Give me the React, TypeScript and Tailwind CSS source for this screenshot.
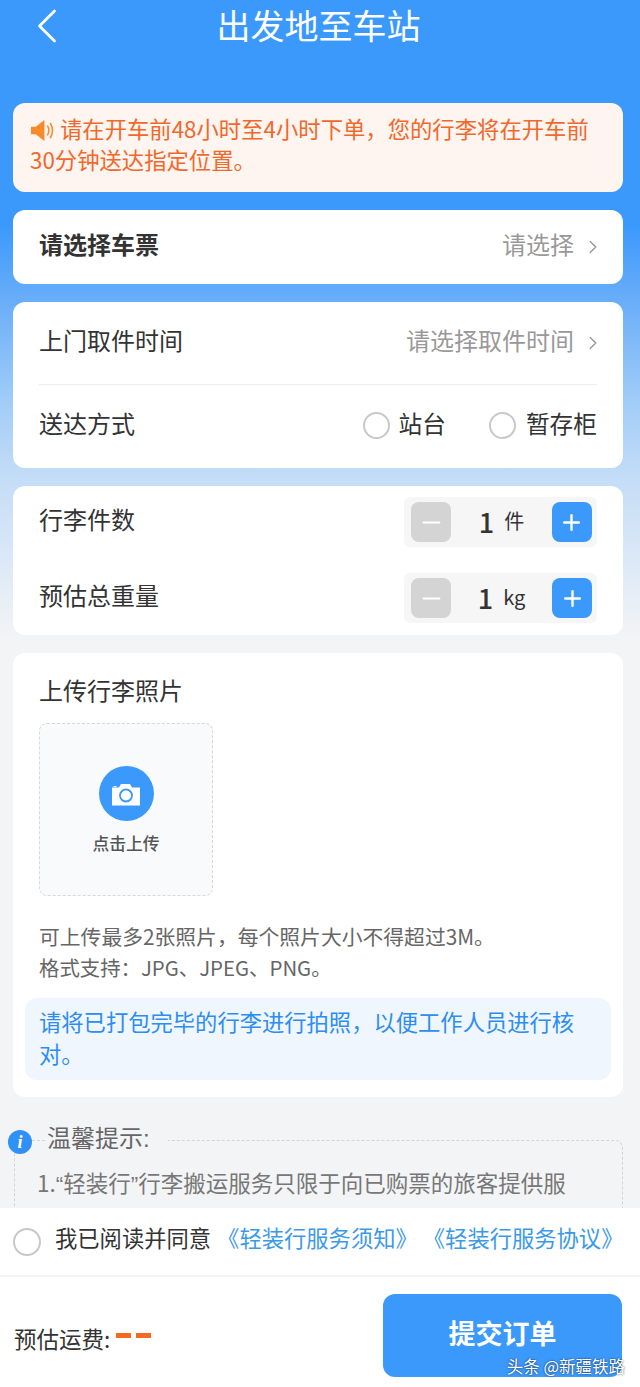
import { ChevronLeft, ChevronRight, Minus, Plus } from "lucide-react";

function Radio({ className }: { className: string }) {
  return <span className={`block rounded-full border-2 border-[#c8c8c8] bg-white ${className}`} />;
}

function Stepper({ value, unit, unitClass }: { value: string; unit: string; unitClass: string }) {
  return (
    <div className="flex h-[50px] w-[193px] items-center justify-between rounded-md bg-[#f6f6f7] pl-[7px] pr-[5px]">
      <span className="flex h-10 w-10 items-center justify-center rounded-lg bg-[#d4d4d4] text-white">
        <Minus size={27} strokeWidth={1.800} />
      </span>
      <span className="flex items-center gap-[10px] pb-[2px] text-[#333]">
        <span className="text-[27px] font-medium leading-none">{value}</span>
        <span className={unitClass}>{unit}</span>
      </span>
      <span className="flex h-10 w-10 items-center justify-center rounded-lg bg-[#3b99fc] text-white">
        <Plus size={25} strokeWidth={2.300} />
      </span>
    </div>
  );
}

function Speaker() {
  return (
    <svg viewBox="0 0 26 26" className="mr-[5px] inline-block h-[25px] w-[25px] align-[-5px]">
      <path d="M1 9h5l9-7v22l-9-7H1z" fill="#f98a2b" />
      <path d="M18 8c2 3 2 7 0 10" fill="none" stroke="#f98a2b" strokeWidth="1.6" />
      <path d="M21 5c3 5 3 11 0 16" fill="none" stroke="#f98a2b" strokeWidth="1.6" />
    </svg>
  );
}

function Camera() {
  return (
    <svg viewBox="0 0 30 24" className="h-6 w-[30px]">
      <path d="M1 5.5h7l2-3.5h9l2 3.5h8v18H1z" fill="#fff" />
      <path d="M2.500 4h3v1h-3z" fill="#fff" />
      <circle cx="15" cy="13.500" r="6" fill="none" stroke="#3b99fc" strokeWidth="1.800" />
    </svg>
  );
}

export default function App() {
  return (
    <div
      className="flex h-[1387px] w-[640px] flex-col overflow-hidden bg-[#f3f4f6] text-[#333]"
      style={{ fontFamily: '"Noto Sans CJK SC", "Noto Sans", sans-serif' }}
    >
      <div className="min-h-0 flex-1 overflow-hidden bg-[linear-gradient(180deg,#3b99fc_0px,#3b99fc_225px,#66acf9_295px,#a0ccf8_400px,#c3dcf7_475px,#f3f4f6_640px)]">
        <div className="relative flex h-[103px] justify-center pr-[3px] pt-[1px]">
          <ChevronLeft className="absolute left-[17px] top-[-4px] text-white" size={60} strokeWidth={1.100} />
          <h1 className="text-[34px] font-normal leading-[48px] text-white">出发地至车站</h1>
        </div>

        <div className="flex flex-col gap-[18px] pl-[13px] pr-[17px]">
          <div className="h-[89px] rounded-xl bg-[#fef4f0] pl-[17px] pr-[20px] pt-[10px] text-[22.350px] leading-[31px] text-[#f0682a]">
            <Speaker />
            请在开车前48小时至4小时下单，您的行李将在开车前30分钟送达指定位置。
          </div>

          <div className="flex h-[74px] items-center justify-between rounded-xl bg-white pl-[26px] pr-[19px]">
            <span className="pb-[6px] text-[24px] font-bold">请选择车票</span>
            <span className="flex items-center gap-[8px] text-[24px] text-[#999]">
              <span className="pb-[6px]">请选择</span>
              <ChevronRight size={22} strokeWidth={1.500} />
            </span>
          </div>

          <div className="h-[166px] rounded-xl bg-white px-[26px]">
            <div className="flex h-[83px] items-center justify-between border-b border-[#eee]">
              <span className="pb-[6px] text-[24px]">上门取件时间</span>
              <span className="-mr-[7px] flex items-center gap-[8px] text-[24px] text-[#999]">
                <span className="pb-[6px]">请选择取件时间</span>
                <ChevronRight size={22} strokeWidth={1.500} />
              </span>
            </div>
            <div className="flex h-[81px] items-center justify-between">
              <span className="pb-[6px] text-[24px]">送达方式</span>
              <div className="flex items-center text-[23.700px]">
                <Radio className="h-[27px] w-[27px]" />
                <span className="ml-[9px] pb-[3px]">站台</span>
                <Radio className="ml-[43px] h-[27px] w-[27px]" />
                <span className="ml-[10px] pb-[3px]">暂存柜</span>
              </div>
            </div>
          </div>

          <div className="flex h-[149px] flex-col gap-[26px] rounded-xl bg-white px-[26px] pt-[11px]">
            <div className="flex items-center justify-between">
              <span className="pb-[6px] text-[24px]">行李件数</span>
              <Stepper value="1" unit="件" unitClass="text-[20px]" />
            </div>
            <div className="flex items-center justify-between">
              <span className="pb-[6px] text-[24px]">预估总重量</span>
              <Stepper value="1" unit="kg" unitClass="text-[20px]" />
            </div>
          </div>

          <div className="h-[444px] rounded-xl bg-white px-[26px] pt-[19px]">
            <h2 className="text-[24px] font-normal leading-[36px]">上传行李照片</h2>
            <div className="mt-[15px] flex h-[173px] w-[174px] flex-col items-center rounded-lg border-[1.5px] border-dashed border-[#d8d8d8] bg-[#f9fafb] pt-[42px]">
              <span className="flex h-[55px] w-[55px] items-center justify-center rounded-full bg-[#3b99fc]">
                <Camera />
              </span>
              <span className="mt-[10px] text-[16.800px] font-medium leading-[24px] text-[#555]">点击上传</span>
            </div>
            <p className="mt-[25px] whitespace-nowrap text-[20.400px] leading-[31px] text-[#666]">
              <span className="text-[20.800px]">可上传最多2张照片，每个照片大小不得超过3M。</span>
              <br />
              格式支持：JPG、JPEG、PNG。
            </p>
            <p className="-mx-[14px] mt-[15px] h-[82px] rounded-xl bg-[#eff6fe] px-[14px] pt-[7px] text-[22.300px] leading-[32px] text-[#2d8df0]">
              请将已打包完毕的行李进行拍照，以便工作人员进行核对。
            </p>
          </div>
        </div>

        <div className="relative mt-[20px] h-[100px] pl-[8px]">
          <div className="absolute left-[14px] right-[17px] top-[23px] h-[100px] rounded-lg border-[1.5px] border-dashed border-[#d4d4d4]" />
          <div className="relative flex items-center">
            <span className="mt-[8px] flex h-6 w-6 items-center justify-center rounded-full bg-[#2f90f5] font-['Liberation_Serif',serif] text-[18px] font-bold italic leading-none text-white">
              i
            </span>
            <span className="ml-[15px] bg-[#f3f4f6] pr-[18px] text-[24px] leading-[40px] text-[#666]">
              温馨提示<span className="font-['Liberation_Sans']">:</span>
            </span>
          </div>
          <p className="relative ml-[29px] mt-[7px] whitespace-nowrap text-[22.500px] leading-[32px] text-[#777]">
            1.<span className="font-['Liberation_Sans']">“</span>轻装行<span className="font-['Liberation_Sans']">”</span>
            行李搬运服务只限于向已购票的旅客提供服
          </p>
        </div>
      </div>

      <div className="flex h-[69px] shrink-0 items-center border-b-2 border-[#f3f3f3] bg-white pl-[13px]">
        <Radio className="h-[28px] w-[28px]" />
        <span className="ml-[14px] whitespace-nowrap pb-[7px] text-[22.300px]">我已阅读并同意</span>
        <span className="ml-[6px] whitespace-nowrap pb-[7px] text-[22.300px] text-[#3b99e8]">《轻装行服务须知》</span>
        <span className="ml-[5px] whitespace-nowrap pb-[7px] text-[22.300px] text-[#3b99e8]">《轻装行服务协议》</span>
      </div>

      <div className="relative flex h-[110px] shrink-0 items-start justify-between bg-white pl-[14px] pr-[18px] pt-[17px]">
        <div className="mt-[28px] flex items-center">
          <span className="text-[22.500px] text-[#333]">预估运费:</span>
          <span className="mb-[6px] ml-[6px] flex gap-[5px]">
            <span className="h-[5px] w-[15px] bg-[#f56a1f]" />
            <span className="h-[5px] w-[15px] bg-[#f56a1f]" />
          </span>
        </div>
        <button className="h-[83px] w-[239px] rounded-xl bg-[#3b99fc] pb-[4px] text-[27px] font-bold text-white">提交订单</button>
        <span className="absolute bottom-[9px] right-[15px] text-[16.500px] leading-[24px] text-white [text-shadow:0_0_2px_rgba(0,0,0,0.8)]">头条 @新疆铁路</span>
      </div>
    </div>
  );
}
